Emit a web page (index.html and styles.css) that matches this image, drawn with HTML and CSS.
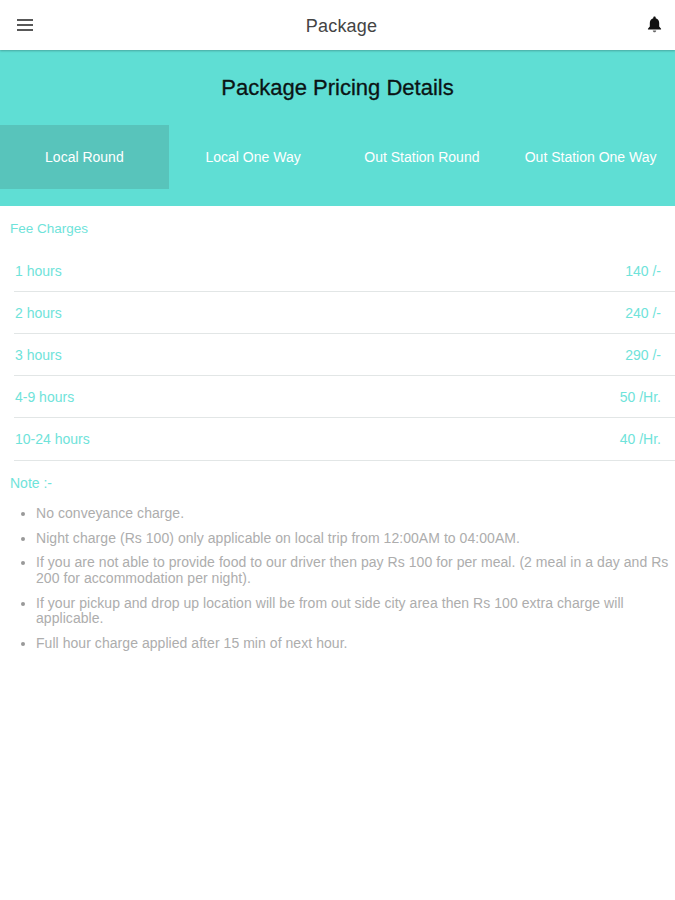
FILE: index.html
```html
<!DOCTYPE html>
<html>
<head>
  <link rel="stylesheet" href="styles.css">
</head>
<body>
  <header class="top-bar">
    <svg class="menu-icon" width="18" height="14" viewBox="0 0 18 14">
      <path d="M1 2h16M1 7h16M1 12h16" stroke="#222" stroke-width="1.7"/>
    </svg>
    <span class="top-title">Package</span>
    <svg class="bell-icon" width="15" height="17" viewBox="0 0 16 18">
      <path d="M8 0.5c-.8 0-1.3.6-1.3 1.3v.5C4.2 3 3 5 3 7.5v3.7L1 13.4v1h14v-1l-2-2.2V7.500c0-2.500-1.200-4.500-3.700-5.200v-.5C9.300 1.100 8.800.5 8 .5z" fill="#111"/>
      <path d="M6.200 15.300h3.600c0 1.100-.8 1.900-1.800 1.900s-1.800-.8-1.800-1.900z" fill="#666"/>
    </svg>
  </header>

  <section class="banner">
    <h1 class="banner-title">Package Pricing Details</h1>
    <div class="tabs">
      <div class="tab active-tab">Local Round</div>
      <div class="tab">Local One Way</div>
      <div class="tab">Out Station Round</div>
      <div class="tab">Out Station One Way</div>
    </div>
  </section>

  <main class="content">
    <p class="section-label">Fee Charges</p>
    <div class="fee-list">
      <div class="fee-row"><span>1 hours</span><span>140 /-</span></div>
      <div class="fee-row"><span>2 hours</span><span>240 /-</span></div>
      <div class="fee-row"><span>3 hours</span><span>290 /-</span></div>
      <div class="fee-row"><span>4-9 hours</span><span>50 /Hr.</span></div>
      <div class="fee-row"><span>10-24 hours</span><span>40 /Hr.</span></div>
    </div>

    <p class="note-label">Note :-</p>
    <ul class="notes">
      <li>No conveyance charge.</li>
      <li>Night charge (Rs 100) only applicable on local trip from 12:00AM to 04:00AM.</li>
      <li>If you are not able to provide food to our driver then pay Rs 100 for per meal. (2 meal in a day and Rs 200 for accommodation per night).</li>
      <li>If your pickup and drop up location will be from out side city area then Rs 100 extra charge will applicable.</li>
      <li>Full hour charge applied after 15 min of next hour.</li>
    </ul>
  </main>
</body>
</html>
```

FILE: styles.css
```css
body {
  margin: 0;
  background-color: white;
  font-family: "Liberation Sans", Arial, sans-serif;
}

.top-bar {
  position: relative;
  z-index: 1;
  height: 50px;
  display: flex;
  align-items: center;
  justify-content: space-between;
  padding: 0 13px 0 16px;
  box-sizing: border-box;
  background-color: white;
  box-shadow: 0 1px 2px rgba(0, 0, 0, 0.25);
}

.menu-icon {
  margin-bottom: 1px;
}

.bell-icon {
  margin-bottom: 1px;
}

.top-title {
  font-size: 18px;
  color: #444;
  letter-spacing: 0.2px;
  margin: 2px 0 0 2px;
}

.banner {
  height: 156px;
  padding-top: 26px;
  box-sizing: border-box;
  background-color: #5fded4;
}

.banner-title {
  margin: 0 0 25px;
  height: 24px;
  font-size: 22px;
  line-height: 24px;
  font-weight: normal;
  text-align: center;
  color: #0b1414;
  -webkit-text-stroke: 0.3px #0b1414;
}

.tabs {
  display: grid;
  grid-template-columns: repeat(4, 1fr);
}

.tab {
  height: 64px;
  display: flex;
  align-items: center;
  justify-content: center;
  font-size: 14px;
  color: white;
}

.active-tab {
  background-color: #58c4bb;
}

.content {
  padding: 15px 0 0 0;
}

.section-label {
  margin: 0 0 0 10px;
  height: 16px;
  font-size: 13.5px;
  line-height: 16px;
  color: #6fe3da;
}

.fee-list {
  margin: 13px 0 0 14px;
}

.fee-row {
  height: 42px;
  display: flex;
  align-items: center;
  justify-content: space-between;
  padding: 1px 14px 0 1px;
  box-sizing: border-box;
  border-bottom: 1px solid #e2e6e6;
  font-size: 14px;
  color: #6fe3da;
}

.fee-row:last-child {
  height: 43px;
  padding-bottom: 1px;
}

.note-label {
  margin: 14px 0 0 10px;
  height: 16px;
  font-size: 14px;
  line-height: 16px;
  color: #6fe3da;
}

.notes {
  margin: 15px 0 0;
  padding: 0 0 0 36px;
  font-size: 14px;
  letter-spacing: 0.05px;
  line-height: 15.6px;
  color: #adadad;
}

.notes li {
  margin-bottom: 9.1px;
}

.notes li::marker {
  color: #999;
}
```
